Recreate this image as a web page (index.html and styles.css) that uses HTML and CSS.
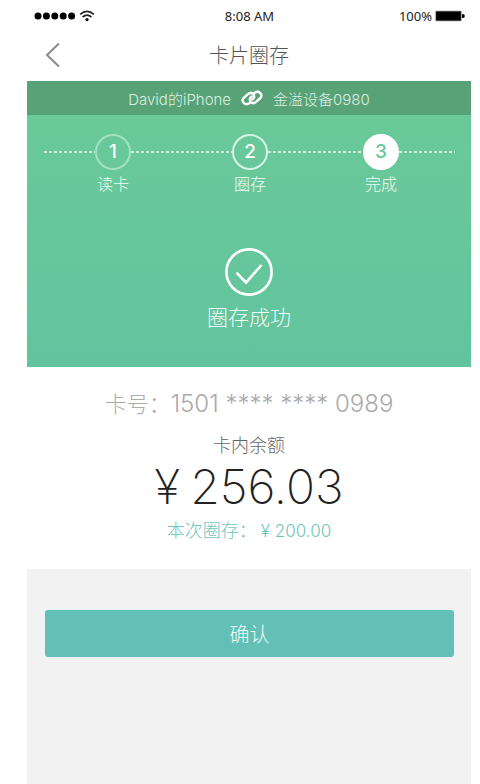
FILE: index.html
```html
<!DOCTYPE html>
<html lang="zh-CN">
<head>
<meta charset="utf-8">
<meta name="viewport" content="width=device-width, initial-scale=1">
<title>卡片圈存</title>
<link rel="stylesheet" href="styles.css">
</head>
<body>
<div class="screen">
  <div class="status">
    <div class="status-signal">
      <svg width="42" height="8" viewBox="0 0 42 8" aria-hidden="true"><circle cx="4" cy="4" r="3.5"/><circle cx="12.4" cy="4" r="3.5"/><circle cx="20.8" cy="4" r="3.5"/><circle cx="29.2" cy="4" r="3.5"/><circle cx="37.6" cy="4" r="3.5"/></svg>
      <svg width="16" height="12" viewBox="0 0 16 12" fill="none" stroke="#222" stroke-width="1.8" aria-hidden="true"><path d="M1.2 4.4Q8-1.6 14.8 4.4M3.6 7Q8 3.2 12.4 7"/><circle cx="8" cy="9.6" r="1.7" fill="#111" stroke="none"/></svg>
    </div>
    <time class="status-time">8:08 AM</time>
    <div class="status-power">
      <span>100%</span>
      <svg width="30" height="12" viewBox="0 0 30 12" aria-hidden="true"><rect x=".4" y=".8" width="26.2" height="10.4" rx="1" fill="#777"/><rect x="1.2" y="1.6" width="24.6" height="8.8"/><path d="M27 4q2.8 0 2.8 2T27 8z"/></svg>
    </div>
  </div>

  <header class="nav">
    <a class="back" href="#" aria-label="返回">
      <svg width="15" height="25" viewBox="0 0 15 25" fill="none" stroke="#8a8a8a" stroke-width="2" aria-hidden="true"><path d="M14 .5 2 12 14 23.500"/></svg>
    </a>
    <h1>卡片圈存</h1>
  </header>

  <section class="hero">
    <div class="devices">
      <span>David的iPhone</span>
      <svg width="22" height="16" viewBox="0 0 22 16" fill="none" stroke="#fff" stroke-width="2.400" stroke-linecap="round" stroke-linejoin="round" aria-hidden="true"><path d="M9.400 12.300 8.200 13.300Q5.400 15.200 2.900 13.100 .4 10.400 2.600 8L7 4.100Q9.900 1.700 12.200 4 14.200 6.500 12.200 8.700L11.400 9.500"/><path d="M12.600 3.700 13.800 2.700Q16.600 .8 19.100 2.900 21.600 5.600 19.400 8L15 11.900Q12.100 14.300 9.800 12 7.800 9.500 9.800 7.300L10.600 6.500"/></svg>
      <span>金溢设备0980</span>
    </div>
    <div class="steps">
      <i class="dots lead"></i>
      <div class="step faded"><b>1</b><span>读卡</span></div>
      <i class="dots first"></i>
      <div class="step"><b>2</b><span>圈存</span></div>
      <i class="dots second"></i>
      <div class="step current"><b>3</b><span>完成</span></div>
      <i class="dots tail"></i>
    </div>
    <div class="result">
      <svg width="48" height="48" viewBox="0 0 48 48" fill="none" stroke="#fff" stroke-width="2.600" aria-hidden="true"><circle cx="24" cy="24" r="22.600"/><path d="M11.500 24.600 21 34.500 36.500 17"/></svg>
      <p>圈存成功</p>
    </div>
  </section>

  <section class="card">
    <p class="number">卡号：<span>1501 **** **** 0989</span></p>
    <p class="caption">卡内余额</p>
    <p class="balance"><span>¥</span><span>256.03</span></p>
    <p class="loaded">本次圈存：<span>¥ 200.00</span></p>
  </section>

  <main class="actions">
    <button type="button">确认</button>
  </main>
</div>
</body>
</html>
```

FILE: styles.css
```css
* { box-sizing: border-box; }

body {
  margin: 0;
  background: #fff;
  color: #666;
  font-family: Inter, "Noto Sans CJK SC", sans-serif;
  font-weight: 300;
}

h1, p { margin: 0; font-weight: 300; }
svg { display: block; flex: none; }

.screen {
  display: flex;
  flex-direction: column;
  min-height: 100vh;
  margin: 0 9px 0 27px;
}

.status {
  display: grid;
  grid-template-columns: 1fr auto 1fr;
  align-items: center;
  height: 32px;
  padding: 0 6px 0 7px;
  color: #222;
  font: 400 13px "Noto Sans", sans-serif;
}
.status-signal, .status-power { display: flex; align-items: center; gap: 3px; }
.status-power { justify-content: flex-end; }

.nav {
  display: grid;
  grid-template-columns: 1fr auto 1fr;
  align-items: center;
  height: 49px;
  padding: 0 18px 2px;
}
.nav h1 { color: #555; font-size: 20px; line-height: 28px; }
.back { justify-self: start; }

.hero {
  height: 286px;
  background: linear-gradient(#6bca98, #62c49f);
  color: #effaf4;
}
.devices {
  display: flex;
  align-items: center;
  justify-content: center;
  gap: 10px;
  height: 34px;
  background: #58a278;
  color: #dcefe4;
  font-size: 15px;
}

.steps { display: flex; padding: 19px 16px 0 17px; }
.dots {
  height: 2px;
  margin-top: 17px;
  background: repeating-linear-gradient(90deg, #cdeedc 0 3px, transparent 3px 5px);
}
.lead { flex: 51; }
.first { flex: 101; }
.second { flex: 95; }
.tail { flex: 56; }

.step {
  display: flex;
  flex-direction: column;
  align-items: center;
  width: 36px;
  font-size: 16px;
  line-height: 28px;
  white-space: nowrap;
}
.step b {
  display: grid;
  place-items: center;
  width: 36px;
  height: 36px;
  border: 2px solid #d9f2e5;
  border-radius: 50%;
  color: #fff;
  font-size: 19px;
  font-weight: 500;
}
.faded b { border-color: #a3dfc0; }
.current b { border-color: #fff; background: #fff; color: #66c79b; }

.result {
  display: flex;
  flex-direction: column;
  align-items: center;
  gap: 7px;
  padding-top: 50px;
  font-size: 21px;
  line-height: 30px;
}

.card {
  display: flex;
  flex-direction: column;
  align-items: center;
  height: 202px;
  padding-top: 21px;
}
.number { color: #aaa; font-size: 22px; line-height: 32px; }
.number span { font-size: 24px; }
.caption { margin-top: 13px; font-size: 18px; line-height: 26px; }
.balance {
  display: flex;
  gap: 10px;
  color: #222;
  font-size: 48px;
  font-weight: 250;
  line-height: 56px;
}
.loaded { margin-top: 3px; color: #6fc5ba; font-size: 18px; line-height: 26px; }
.loaded span { margin-left: 4px; font-size: 17px; }

.actions {
  flex: 1;
  padding: 41px 17px 0 18px;
  background: #f2f2f2;
}
.actions button {
  display: block;
  width: 100%;
  height: 47px;
  padding: 0;
  border: 0;
  border-radius: 3px;
  background: #63c0b6;
  color: #effaf8;
  font: inherit;
  font-size: 20px;
}
```
